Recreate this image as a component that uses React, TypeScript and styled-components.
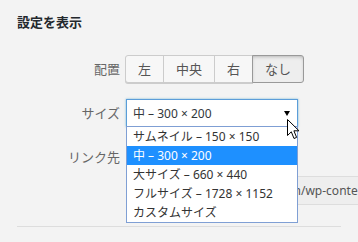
import styled, { createGlobalStyle } from 'styled-components';

const GlobalStyle = createGlobalStyle`
  html, body {
    margin: 0;
    padding: 0;
    background: #f3f3f3;
    overflow: hidden;
  }

  body {
    font-family: 'Noto Sans', 'Noto Sans CJK JP', sans-serif;
    font-size: 13px;
    color: #444;
  }
`;

const Panel = styled.section`
  padding: 12px 0 0 17px;
  width: 341px;
  height: 242px;
  box-sizing: border-box;
`;

const Title = styled.h2`
  margin: 0;
  font-size: 13px;
  font-weight: 700;
  line-height: 20px;
  color: #23282d;
`;

const Row = styled.div<{ $top: number }>`
  display: grid;
  grid-template-columns: 103px 1fr;
  column-gap: 6px;
  align-items: center;
  margin-top: ${({ $top }) => $top}px;
`;

const Label = styled.span`
  text-align: right;
  color: #666;
  font-size: 13px;
  line-height: 18px;
`;

const ButtonGroup = styled.div`
  display: flex;
  margin-left: -1px;
`;

const GroupButton = styled.button<{ $active?: boolean }>`
  position: relative;
  height: 28px;
  padding: 0 12px;
  margin-right: -1px;
  font-family: inherit;
  font-size: 13px;
  line-height: 26px;
  color: #555;
  border: 1px solid ${({ $active }) => ($active ? '#999' : '#ccc')};
  background: ${({ $active }) => ($active ? '#eee' : '#f7f7f7')};
  box-shadow: ${({ $active }) =>
    $active ? 'inset 0 2px 5px -3px rgba(0, 0, 0, 0.5)' : '0 1px 0 #ccc'};
  z-index: ${({ $active }) => ($active ? 1 : 0)};
  border-radius: 0;
  cursor: pointer;

  &:first-child {
    border-radius: 3px 0 0 3px;
  }

  &:last-child {
    border-radius: 0 3px 3px 0;
  }
`;

const SelectWrap = styled.div`
  position: relative;
  width: 172px;
`;

const SelectBox = styled.div<{ $focused?: boolean }>`
  display: flex;
  align-items: center;
  justify-content: space-between;
  height: 28px;
  box-sizing: border-box;
  padding: 0 7px 0 6px;
  background: #fff;
  color: #32373c;
  font-size: 12px;
  border: 1px solid ${({ $focused }) => ($focused ? '#5b9dd9' : '#ddd')};
  box-shadow: ${({ $focused }) =>
    $focused ? '0 0 2px rgba(30, 140, 190, 0.6)' : 'inset 0 1px 2px rgba(0,0,0,.07)'};
`;

const Arrow = styled.svg`
  width: 6px;
  height: 5px;
  flex: none;
`;

const Dropdown = styled.ul`
  position: absolute;
  top: 27px;
  left: 0;
  width: 172px;
  margin: 0;
  padding: 0;
  list-style: none;
  box-sizing: border-box;
  background: #fff;
  border: 1px solid #7f9fd4;
  z-index: 5;
`;

const Option = styled.li<{ $selected?: boolean }>`
  height: 19px;
  line-height: 19px;
  padding-left: 6px;
  font-size: 12px;
  white-space: nowrap;
  color: ${({ $selected }) => ($selected ? '#fff' : '#333')};
  background: ${({ $selected }) => ($selected ? '#1e90ff' : 'transparent')};
`;

const Cursor = styled.svg`
  position: absolute;
  left: 161px;
  top: 20px;
  width: 13px;
  height: 21px;
  z-index: 10;
`;

const UrlInput = styled.div`
  width: 260px;
  height: 29px;
  box-sizing: border-box;
  padding: 0 8px;
  border: 1px solid #ddd;
  background: #eee;
  color: #555;
  font-size: 12px;
  line-height: 27px;
  white-space: nowrap;
  overflow: hidden;
`;

const Separator = styled.hr`
  margin: 21px 0 0;
  border: 0;
  border-top: 1px solid #ddd;
`;

const sizes = [
  'サムネイル – 150 × 150',
  '中 – 300 × 200',
  '大サイズ – 660 × 440',
  'フルサイズ – 1728 × 1152',
  'カスタムサイズ',
];

export default function App() {
  return (
    <>
      <GlobalStyle />
      <Panel>
        <Title>設定を表示</Title>

        <Row $top={23}>
          <Label>配置</Label>
          <ButtonGroup>
            <GroupButton>左</GroupButton>
            <GroupButton>中央</GroupButton>
            <GroupButton>右</GroupButton>
            <GroupButton $active>なし</GroupButton>
          </ButtonGroup>
        </Row>

        <Row $top={16}>
          <Label>サイズ</Label>
          <SelectWrap>
            <SelectBox $focused>
              <span>中 – 300 × 200</span>
              <Arrow viewBox="0 0 6 5">
                <polygon points="0,0 6,0 3,5" fill="#000" />
              </Arrow>
            </SelectBox>
            <Dropdown>
              {sizes.map((s) => (
                <Option key={s} $selected={s.startsWith('中')}>
                  {s}
                </Option>
              ))}
            </Dropdown>
            <Cursor viewBox="0 0 13 21">
              <path
                d="M0.5 0.5 L0.5 16.5 L4.3 12.8 L7 19.5 L9.6 18.4 L6.9 11.8 L12 11.8 Z"
                fill="#fff"
                stroke="#000"
                strokeWidth="1"
                strokeLinejoin="miter"
              />
            </Cursor>
          </SelectWrap>
        </Row>

        <Row $top={16}>
          <Label>リンク先</Label>
          <SelectWrap>
            <SelectBox>
              <span>メディアファイル</span>
            </SelectBox>
          </SelectWrap>
        </Row>

        <Row $top={5}>
          <span />
          <UrlInput>http://www.example-site.com/wp-content/uploads/2016/05/sample.jpg</UrlInput>
        </Row>

        <Separator />
      </Panel>
    </>
  );
}
